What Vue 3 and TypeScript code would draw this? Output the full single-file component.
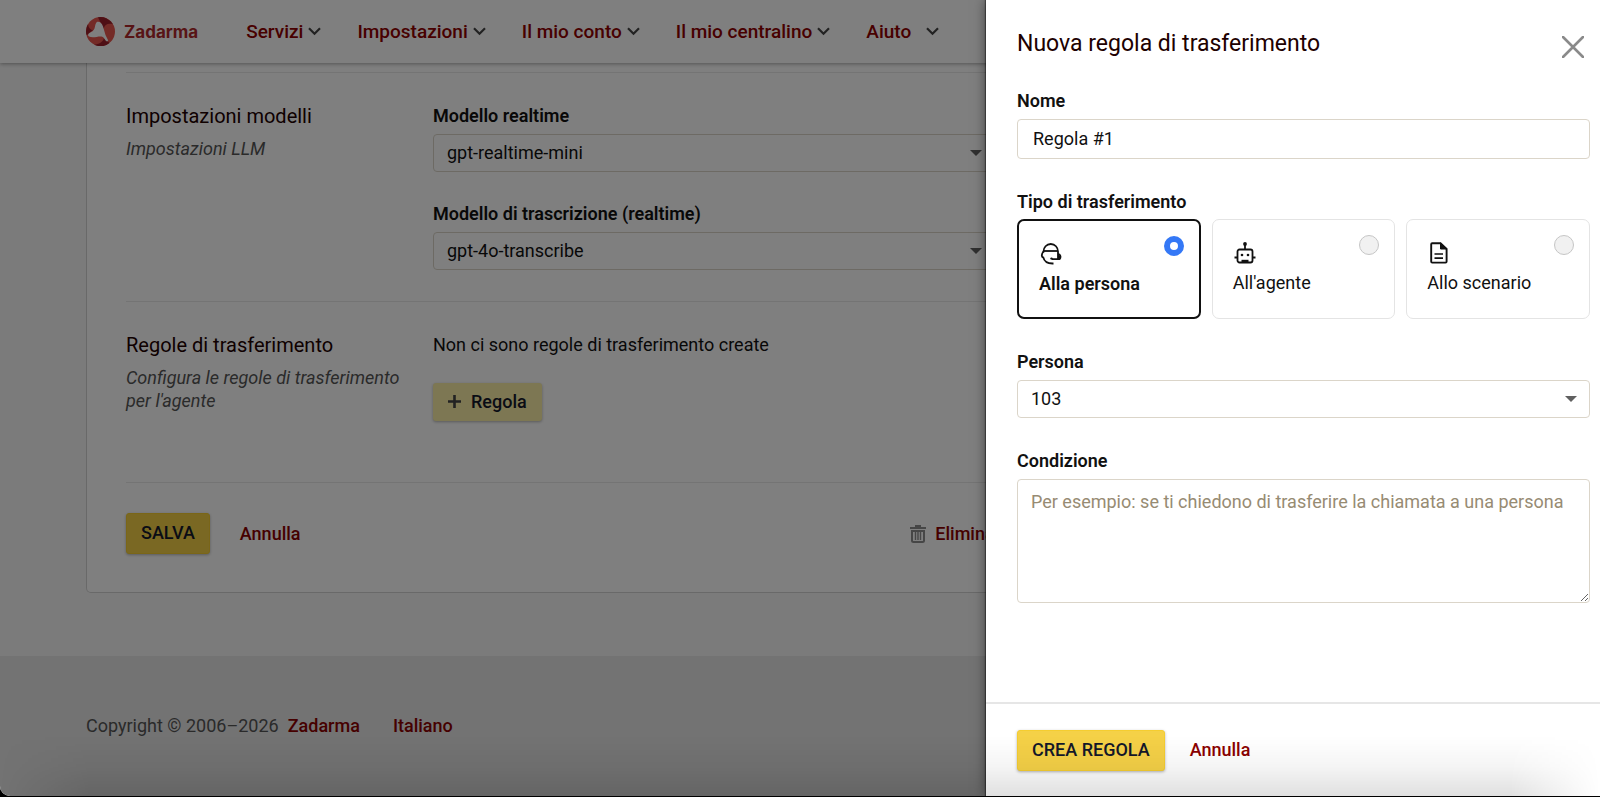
<script setup lang="ts">
import { ref } from 'vue'

type TransferType = 'person' | 'agent' | 'scenario'

interface MenuItem {
  label: string
  wide?: boolean
}

const menu: MenuItem[] = [
  { label: 'Servizi' },
  { label: 'Impostazioni' },
  { label: 'Il mio conto' },
  { label: 'Il mio centralino' },
  { label: 'Aiuto', wide: true },
]

const transferTypes: { id: TransferType; label: string }[] = [
  { id: 'person', label: 'Alla persona' },
  { id: 'agent', label: "All'agente" },
  { id: 'scenario', label: 'Allo scenario' },
]

const realtimeModel = ref('gpt-realtime-mini')
const transcribeModel = ref('gpt-4o-transcribe')
const ruleName = ref('Regola #1')
const transferType = ref<TransferType>('person')
const person = ref('103')
const condition = ref('')
</script>

<template>
  <div class="window">
    <div class="page">
      <header class="topbar">
        <a class="brand" href="#">
          <svg width="29" height="29" viewBox="0 0 29 29" aria-hidden="true">
            <circle cx="14.500" cy="14.500" r="14.500" fill="#e8564e" />
            <path d="M12 0.300A14.500 14.500 0 0 1 27 7.200C22 6 18.500 7.500 17.500 12L14 4.500Z" fill="#9c1f2b" />
            <path d="M0.400 17.500A14.500 14.500 0 0 1 2 7C2.500 11 4.500 13 7 13L1 18Z" fill="#9c1f2b" />
            <path d="M8 27.500C13 27.500 17 25 18 21L22 24.500L23.500 26A14.500 14.500 0 0 1 8 27.500Z" fill="#9c1f2b" />
            <path d="M11.500 4.800C14 4.500 16 6.500 17 9.500L19.500 18L22.200 23.600C21.800 24.600 21 24.600 20 24C18.500 22 17.500 20 15.500 19.600C12 19 7 21.500 3 19.500C1.500 18.500 2 17 3.500 16C6 14.500 7.500 14 8.500 11.500C9.300 9 9.500 5.300 11.500 4.800Z" fill="#fff" />
          </svg>
          <span class="brand-name">Zadarma</span>
        </a>
        <nav class="menu">
          <a v-for="item in menu" :key="item.label" href="#" class="menu-item" :class="{ wide: item.wide }">
            {{ item.label }}
            <svg width="13" height="9" viewBox="0 0 13 9" aria-hidden="true">
              <path d="M1 1.300L6.500 6.800L12 1.300" fill="none" stroke="#444" stroke-width="2.200" />
            </svg>
          </a>
        </nav>
      </header>

      <main class="content">
        <form class="card" @submit.prevent>
          <section class="section">
            <div class="intro">
              <h2>Impostazioni modelli</h2>
              <p>Impostazioni LLM</p>
            </div>
            <div class="fields">
              <div class="field">
                <label for="realtime">Modello realtime</label>
                <select id="realtime" v-model="realtimeModel" class="control select">
                  <option>gpt-realtime-mini</option>
                </select>
              </div>
              <div class="field">
                <label for="transcribe">Modello di trascrizione (realtime)</label>
                <select id="transcribe" v-model="transcribeModel" class="control select">
                  <option>gpt-4o-transcribe</option>
                </select>
              </div>
            </div>
          </section>

          <section class="section rules">
            <div class="intro">
              <h2>Regole di trasferimento</h2>
              <p>Configura le regole di trasferimento per l'agente</p>
            </div>
            <div>
              <p class="empty">Non ci sono regole di trasferimento create</p>
              <button type="button" class="btn btn-light">
                <svg width="13" height="13" viewBox="0 0 13 13" aria-hidden="true">
                  <path d="M6.500 0V13M0 6.500H13" stroke="#444" stroke-width="2.600" />
                </svg>
                Regola
              </button>
            </div>
          </section>

          <div class="actions">
            <button type="submit" class="btn btn-main">SALVA</button>
            <a href="#" class="link">Annulla</a>
            <a href="#" class="link remove">
              <svg width="16" height="18" viewBox="0 0 16 18" aria-hidden="true">
                <path d="M5 0H11V2H16V4H0V2H5Z" fill="#8c8c8c" />
                <path d="M2 6V15.500Q2 17 3.500 17H12.500Q14 17 14 15.500V6Z" fill="none" stroke="#8c8c8c" stroke-width="2" />
                <path d="M5.500 7V15M8 7V15M10.500 7V15" stroke="#8c8c8c" stroke-width="1.400" />
              </svg>
              Elimina
            </a>
          </div>
        </form>
      </main>

      <footer class="footer">
        <span>Copyright © 2006–2026</span>
        <a href="#" class="link">Zadarma</a>
        <a href="#" class="link language">Italiano</a>
      </footer>
    </div>

    <div class="backdrop"></div>

    <form class="drawer" role="dialog" aria-labelledby="drawer-title" @submit.prevent>
      <div class="drawer-body">
        <div class="drawer-head">
          <h1 id="drawer-title">Nuova regola di trasferimento</h1>
          <button type="button" class="close" aria-label="Chiudi">
            <svg width="22" height="22" viewBox="0 0 22 22" aria-hidden="true">
              <path d="M1 1L21 21M21 1L1 21" stroke="#8a8a8a" stroke-width="2.600" stroke-linecap="round" />
            </svg>
          </button>
        </div>

        <div class="field">
          <label for="name">Nome</label>
          <input id="name" v-model="ruleName" type="text" class="control name" />
        </div>

        <fieldset class="field types">
          <legend>Tipo di trasferimento</legend>
          <div class="type-list">
            <label
              v-for="type in transferTypes"
              :key="type.id"
              class="type"
              :class="{ selected: transferType === type.id }"
            >
              <span class="type-text">
                <svg v-if="type.id === 'person'" width="24" height="24" viewBox="0 0 24 24" fill="none" stroke="#111" stroke-width="1.800" aria-hidden="true">
                  <path d="M4.500 10.500V9.500C4.500 5.500 7.500 2 11.800 2C16 2 19 5.500 19 9.500V17" />
                  <path d="M4 9H19" />
                  <path d="M4.500 9.500C2.800 11.500 2.300 13.500 3.500 15.200L4.300 15.400C5 18.500 8 21.800 14.500 21.500" />
                  <path d="M19 11.800C22 12.500 22 16 20.500 17.200H13" />
                  <path d="M19 12.500L21 14V17H19Z" fill="#111" stroke="none" />
                  <circle cx="12.500" cy="16.600" r="1.200" fill="#111" stroke="none" />
                </svg>
                <svg v-else-if="type.id === 'agent'" width="24" height="24" viewBox="0 0 24 24" fill="none" stroke="#111" stroke-width="1.800" aria-hidden="true">
                  <rect x="4.500" y="8.500" width="15" height="13" rx="2" />
                  <path d="M12 3V8.500" stroke-width="1.800" />
                  <path d="M1.500 16.500H4M20 16.500H22.500" stroke-width="1.800" />
                  <circle cx="12" cy="3" r="1.900" fill="#111" stroke="none" />
                  <circle cx="9" cy="14" r="1.300" fill="#111" stroke="none" />
                  <circle cx="15" cy="14" r="1.300" fill="#111" stroke="none" />
                  <path d="M8.500 20H15.500" stroke-width="2.400" />
                </svg>
                <svg v-else width="24" height="24" viewBox="0 0 24 24" fill="none" stroke="#111" stroke-width="1.900" aria-hidden="true">
                  <path d="M13.500 2.200H5.200Q4.200 2.200 4.200 3.200V20.600Q4.200 21.600 5.200 21.600H18.600Q19.600 21.600 19.600 20.600V8Z" />
                  <path d="M13.500 2V8H19.600Z" fill="#111" stroke-width="1" />
                  <path d="M7.500 13H16M7.500 17.200H16" stroke-width="1.700" />
                </svg>
                {{ type.label }}
              </span>
              <input v-model="transferType" type="radio" name="transfer-type" :value="type.id" />
            </label>
          </div>
        </fieldset>

        <div class="field">
          <label for="person">Persona</label>
          <select id="person" v-model="person" class="control select">
            <option>103</option>
          </select>
        </div>

        <div class="field">
          <label for="condition">Condizione</label>
          <textarea
            id="condition"
            v-model="condition"
            class="control condition"
            placeholder="Per esempio: se ti chiedono di trasferire la chiamata a una persona"
          ></textarea>
        </div>
      </div>

      <div class="drawer-foot">
        <button type="submit" class="btn btn-main">CREA REGOLA</button>
        <a href="#" class="link">Annulla</a>
      </div>
    </form>

    <div class="shade"></div>
  </div>
</template>

<style>
body {
  background: #000;
}
</style>

<style scoped>
* {
  box-sizing: border-box;
}

.window {
  position: relative;
  min-height: calc(100vh - 1px);
  display: flex;
  overflow: hidden;
  border-bottom-left-radius: 10px;
  font-family: Roboto, 'Liberation Sans', sans-serif;
  font-size: 18px;
  line-height: 24px;
  color: #111;
}

h1,
h2,
p,
fieldset {
  margin: 0;
  padding: 0;
  border: 0;
}

a {
  text-decoration: none;
}

.page {
  flex: 1;
  display: flex;
  flex-direction: column;
  isolation: isolate;
  background: #f7f7f7;
}

.topbar {
  position: relative;
  z-index: 1;
  display: flex;
  align-items: center;
  height: 63px;
  padding: 0 86px;
  background: #fff;
  box-shadow: 0 1px 4px rgba(0, 0, 0, 0.35);
}

.brand {
  display: flex;
  align-items: center;
  gap: 9px;
  margin-right: 48px;
}

.brand-name {
  font-family: Inter, sans-serif;
  font-size: 17px;
  font-weight: 700;
  color: #b0282c;
}

.menu {
  display: flex;
  gap: 36px;
}

.menu-item {
  display: flex;
  align-items: center;
  gap: 5px;
  font-size: 19px;
  font-weight: 500;
  color: #900000;
  white-space: nowrap;
}

.menu-item.wide {
  gap: 15px;
}

.content {
  display: grid;
  grid-template-columns: minmax(0, 2fr) minmax(0, 1fr);
  column-gap: 5px;
  padding: 0 86px 63px;
}

.card {
  padding: 9px 39px 38px;
  background: #fff;
  border: 1px solid #d2d2d2;
  border-top: 0;
  border-radius: 0 0 5px 5px;
}

.section {
  display: grid;
  grid-template-columns: 277px minmax(0, 1fr);
  column-gap: 30px;
  padding: 31px 0;
  border-top: 1px solid #e9e9e9;
}

.rules {
  padding-bottom: 61px;
}

h2 {
  font-size: 20px;
  line-height: 24px;
  font-weight: 400;
  color: #200000;
}

.intro p {
  margin-top: 9px;
  line-height: 23px;
  font-style: italic;
  color: #555;
}

.fields {
  display: flex;
  flex-direction: column;
  gap: 30px;
}

.field {
  display: flex;
  flex-direction: column;
  gap: 6px;
}

.field > label,
legend {
  padding: 0;
  font-weight: 600;
}

.control {
  width: 100%;
  border: 1px solid #dbd5c9;
  border-radius: 4px;
  background-color: #fff;
  font-family: inherit;
  font-size: 18px;
  color: #111;
  outline: 0;
}

.select {
  height: 38px;
  padding: 0 40px 2px 13px;
  appearance: none;
  background-image: url("data:image/svg+xml,%3Csvg xmlns='http://www.w3.org/2000/svg' width='14' height='8'%3E%3Cpath d='M1 1H13L7 7Z' fill='%23606060'/%3E%3C/svg%3E");
  background-repeat: no-repeat;
  background-position: right 11px center;
}

.empty {
  margin-bottom: 26px;
}

.btn {
  display: inline-flex;
  align-items: center;
  justify-content: center;
  padding: 0 14px 2px;
  border: 1px solid transparent;
  border-radius: 3px;
  font-family: inherit;
  font-size: 18px;
  font-weight: 500;
  color: #14182a;
  white-space: nowrap;
  box-shadow: 0 1px 3px rgba(0, 0, 0, 0.3);
}

.btn-main {
  height: 41px;
  background: #f5d147;
  border-color: #f5cd30;
}

.btn-light {
  height: 38px;
  gap: 10px;
  background: #faeea6;
}

.link {
  font-weight: 500;
  color: #8c0000;
}

.actions {
  display: flex;
  align-items: center;
  gap: 30px;
  padding-top: 30px;
  border-top: 1px solid #e9e9e9;
}

.remove {
  display: flex;
  align-items: center;
  gap: 9px;
  margin-left: auto;
}

.footer {
  flex: 1;
  display: flex;
  align-items: center;
  gap: 9px;
  padding: 0 86px;
  background: #e6e6e6;
  color: #555;
}

.language {
  margin-left: 24px;
}

.backdrop {
  position: absolute;
  inset: 0;
  background: rgba(0, 0, 0, 0.5);
}

.drawer {
  position: absolute;
  top: 0;
  right: 0;
  bottom: 0;
  width: 614px;
  max-width: 100%;
  display: flex;
  flex-direction: column;
  background: #fff;
  box-shadow: 0 0 1px 1px rgba(0, 0, 0, 0.4), 0 0 12px rgba(0, 0, 0, 0.5);
}

.drawer-body {
  flex: 1;
  display: flex;
  flex-direction: column;
  gap: 31px;
  padding: 30px 10px 0 31px;
}

.drawer-head {
  display: flex;
  justify-content: space-between;
  align-items: center;
  height: 28px;
}

h1 {
  font-size: 23px;
  line-height: 26px;
  font-weight: 400;
  color: #200000;
}

.close {
  display: flex;
  margin-top: 6px;
  padding: 0 6px;
  border: 0;
  background: none;
}

.name {
  height: 40px;
  padding: 0 15px 2px;
}

legend {
  margin-bottom: 5px;
}

.types {
  display: block;
}

.type-list {
  display: grid;
  grid-template-columns: repeat(3, minmax(0, 1fr));
  gap: 11px;
}

.type {
  display: flex;
  justify-content: space-between;
  align-items: flex-start;
  height: 100px;
  padding: 15px 15px 0 20px;
  border: 1px solid #e4e4e4;
  border-radius: 7px;
}

.type.selected {
  border: 2px solid #111;
  font-weight: 600;
}

.type-text {
  display: flex;
  flex-direction: column;
  gap: 6px;
  padding-top: 6px;
}

.type input {
  width: 20px;
  height: 20px;
  margin: 0;
  appearance: none;
  border: 1px solid #c6c6c6;
  border-radius: 50%;
  background: #f1f1f1;
}

.type input:checked {
  border: 6px solid #3478f6;
  background: #fff;
}

.condition {
  display: block;
  height: 124px;
  padding: 10px 13px;
  line-height: 24px;
  resize: vertical;
}

.condition::placeholder {
  color: #978b73;
  opacity: 1;
}

.drawer-foot {
  display: flex;
  align-items: center;
  gap: 25px;
  height: 94px;
  padding: 0 31px;
  border-top: 2px solid #e6e6e6;
}

.shade {
  position: absolute;
  left: 0;
  right: 0;
  bottom: 0;
  height: 60px;
  pointer-events: none;
  background: linear-gradient(rgba(0, 0, 0, 0), rgba(0, 0, 0, 0.04) 50%, rgba(0, 0, 0, 0.12));
  mask-image: linear-gradient(90deg, transparent, #000 90px, #000 calc(100% - 90px), transparent);
}
</style>
